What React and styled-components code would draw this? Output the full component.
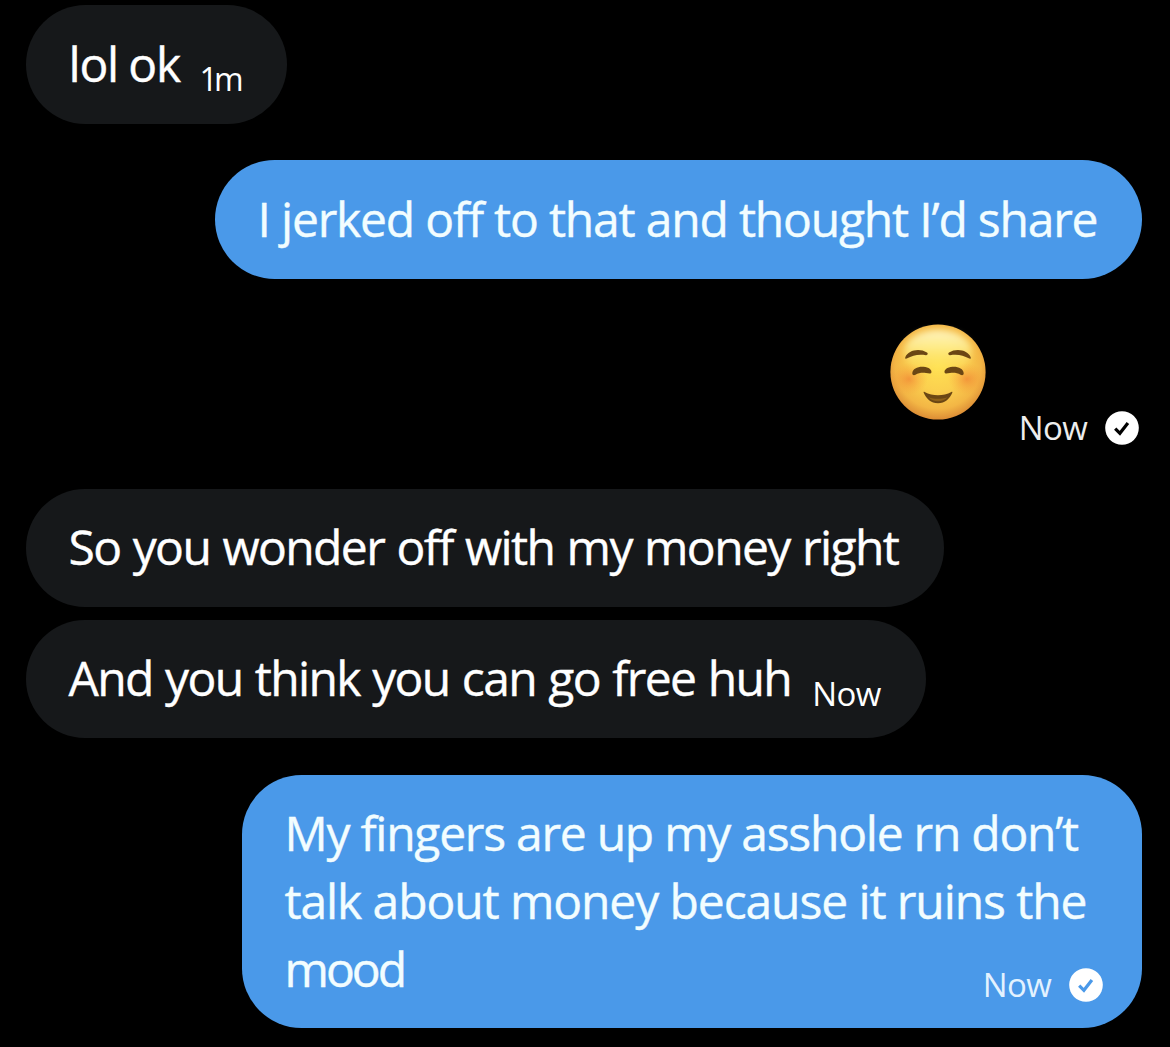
import React from 'react';
import styled, { createGlobalStyle } from 'styled-components';

const GlobalStyle = createGlobalStyle`
  body { margin: 0; background: #000; }
  * { box-sizing: border-box; }
`;

const Conversation = styled.main`
  display: flex;
  flex-direction: column;
  width: 1170px;
  height: 1047px;
  padding: 5px 28px 0 26px;
  overflow: hidden;
  background: #000;
  color: #fff;
  font-family: 'Open Sans', 'Noto Sans', sans-serif;
`;

const Bubble = styled.article`
  flex: none;
  align-self: ${(p) => (p.$sent ? 'flex-end' : 'flex-start')};
  width: ${(p) => p.$width}px;
  min-height: 118.5px;
  margin-top: ${(p) => p.$gap || 0}px;
  padding: 24.5px ${(p) => p.$end || 39}px 24.5px 42.5px;
  border-radius: 59.5px;
  background: ${(p) => (p.$sent ? '#4a99e9' : '#16181a')};
  color: ${(p) => (p.$sent ? '#f2fdff' : '#fff')};
`;

const Row = styled.div`
  display: flex;
  justify-content: space-between;
`;

const Line = styled.p`
  margin: 0;
  font-size: 48px;
  line-height: 68px;
  white-space: nowrap;
  letter-spacing: ${(p) => p.$track || 0}px;
  word-spacing: ${(p) => p.$words || 0}px;
  -webkit-text-stroke: 0.4px currentColor;
`;

const Meta = styled.div`
  display: flex;
  align-self: flex-end;
  align-items: center;
  gap: 18px;
  height: 34px;
  margin-bottom: ${(p) => p.$lift || 0}px;
`;

const Time = styled.time`
  font-size: ${(p) => p.$size || 33}px;
  line-height: 34px;
  letter-spacing: ${(p) => p.$track ?? -0.7}px;
  color: ${(p) => p.$color || '#fff'};
`;

const Check = styled.svg`
  display: block;
  flex: none;
  width: 34px;
  height: 34px;
`;

const EmojiRow = styled.article`
  display: flex;
  align-self: flex-end;
  gap: 33px;
  height: 121px;
  margin: 45px 3px 0 0;
`;

const Emoji = styled.svg`
  display: block;
  width: 96px;
  height: 96px;
`;

function Delivered({ tick }) {
  return (
    <Check viewBox="0 0 34 34" role="img" aria-label="Delivered">
      <circle cx="17" cy="17" r="16.8" fill="#fff" />
      <path d="M10.2 17.6l4.7 4.7 8-10.4" fill="none" stroke={tick} strokeWidth="3.2" />
    </Check>
  );
}

function SmilingFace() {
  return (
    <Emoji viewBox="0 0 96 96" role="img" aria-label="Smiling face">
      <defs>
        <radialGradient id="face" cx="48" cy="42" r="55" gradientUnits="userSpaceOnUse">
          <stop offset="0" stopColor="#ffe052" />
          <stop offset=".45" stopColor="#fbd04f" />
          <stop offset=".78" stopColor="#f3b645" />
          <stop offset="1" stopColor="#d98733" />
        </radialGradient>
        <linearGradient id="shine" x1="0" y1="3" x2="0" y2="50" gradientUnits="userSpaceOnUse">
          <stop offset="0" stopColor="#fffbe0" stopOpacity=".85" />
          <stop offset=".4" stopColor="#fff8a8" stopOpacity=".7" />
          <stop offset="1" stopColor="#ffe95a" stopOpacity="0" />
        </linearGradient>
        <radialGradient id="blush">
          <stop offset="0" stopColor="#ef772f" stopOpacity=".6" />
          <stop offset="1" stopColor="#f79a38" stopOpacity="0" />
        </radialGradient>
        <filter id="soft" x="-20%" y="-20%" width="140%" height="140%">
          <feGaussianBlur stdDeviation="3" />
        </filter>
      </defs>
      <circle cx="48" cy="48" r="47.6" fill="url(#face)" />
      <ellipse cx="48" cy="28" rx="34" ry="22" fill="url(#shine)" filter="url(#soft)" />
      <ellipse cx="19" cy="55" rx="19" ry="16" fill="url(#blush)" />
      <ellipse cx="77" cy="55" rx="19" ry="16" fill="url(#blush)" />
      <g fill="#6b4614">
        <path d="M15.3 33.2C18 26.500 29 23.500 37 28.600c1.400 1 .6 2.800-1 2.600C28 30.100 23 31.300 16.700 34.600c-.9.5-1.900-.2-1.400-1.400z" />
        <path d="M80.700 33.200C78 26.500 67 23.500 59 28.600c-1.400 1-.6 2.800 1 2.600 8-1.100 13 .1 19.300 3.400.9.500 1.900-.2 1.400-1.400z" />
        <path d="M22.300 49.200C22.500 44.500 28 42.300 33.500 42.700c5.500.4 8.500 3.300 7.900 5.700-.5 1.700-2.700.9-5.400.6-4-.4-7.500-.1-10.500 1.700-1.500 1-3.300.5-3.200-1.500z" />
        <path d="M73.700 49.200C73.500 44.500 68 42.300 62.500 42.700c-5.500.4-8.500 3.300-7.900 5.700.5 1.700 2.700.9 5.400.6 4-.4 7.500-.1 10.500 1.700 1.500 1 3.300.5 3.200-1.500z" />
        <path d="M34.600 67.900c8.200 4.300 18.600 4.300 26.800 0 .8-.4 1.200.1.900.9C60 74.600 55 79.300 48 79.300S36 74.600 33.700 68.800c-.3-.8.1-1.300.9-.9z" />
      </g>
      <path d="M38.500 73.200c6 2 13 2 19 0-4.500 5.300-14.500 5.300-19 0z" fill="#8d6019" />
    </Emoji>
  );
}

export default function App() {
  return (
    <>
      <GlobalStyle />
      <Conversation>
        <Bubble $width={261} $end={47.5}>
          <Row>
            <Line $track={-1.2} $words={-1}>lol ok</Line>
            <Meta $lift={1.5}><Time $size={32} $track={-4}>1m</Time></Meta>
          </Row>
        </Bubble>
        <Bubble $sent $width={927} $gap={36.5}>
          <Line $track={-1.2}>I jerked off to that and thought I’d share</Line>
        </Bubble>
        <EmojiRow>
          <SmilingFace />
          <Meta>
            <Time $color="#ededed">Now</Time>
            <Delivered tick="#000" />
          </Meta>
        </EmojiRow>
        <Bubble $width={918} $gap={44}>
          <Line $track={-1.6} $words={1.3}>So you wonder off with my money right</Line>
        </Bubble>
        <Bubble $width={900} $gap={12.5} $end={45.5}>
          <Row>
            <Line $track={-1.65} $words={1.5}>And you think you can go free huh</Line>
            <Meta $lift={1.5}><Time>Now</Time></Meta>
          </Row>
        </Bubble>
        <Bubble $sent $width={900} $gap={36.5}>
          <Line $track={-1.26}>My fingers are up my asshole rn don’t</Line>
          <Line $track={-1.1}>talk about money because it ruins the</Line>
          <Row>
            <Line $track={-3}>mood</Line>
            <Meta $lift={1}>
              <Time $color="#e3f2ff">Now</Time>
              <Delivered tick="#4a99e9" />
            </Meta>
          </Row>
        </Bubble>
      </Conversation>
    </>
  );
}
